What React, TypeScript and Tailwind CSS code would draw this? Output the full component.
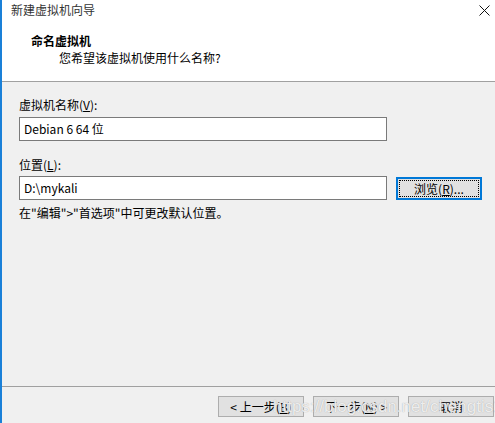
import React from "react";

const font = { fontFamily: '"Noto Sans CJK SC", "Noto Sans", sans-serif' };

function U({ children }: { children: React.ReactNode }) {
  return <span className="underline underline-offset-[1px]">{children}</span>;
}

export default function App() {
  return (
    <div
      className="relative w-[495px] h-[423px] bg-[#f0f0f0] border-l-2 border-[#1a80d8] flex flex-col text-[12px] text-black overflow-hidden"
      style={font}
    >
      <div className="h-[82px] bg-white border-b border-[#a0a0a0] flex flex-col shrink-0">
        <div className="flex items-start justify-between pt-[2px] pl-[9px] pr-[4px]">
          <span className="leading-[16px] text-[#333]">新建虚拟机向导</span>
          <svg width="11" height="11" viewBox="0 0 11 11" className="mt-[3px] mr-[1px]">
            <path d="M0.5 0.5 L10.5 10.5 M10.5 0.5 L0.5 10.5" stroke="#111" strokeWidth="1" />
          </svg>
        </div>
        <div className="mt-[15px] pl-[29px] leading-[16px] font-bold">命名虚拟机</div>
        <div className="mt-[1px] pl-[57px] leading-[16px]">您希望该虚拟机使用什么名称?</div>
      </div>

      <div className="flex-1 pt-[15px] pl-[17px] flex flex-col">
        <div className="leading-[16px]">
          虚拟机名称(<U>V</U>):
        </div>
        <div className="mt-[4px] w-[368px] h-[24px] bg-white border border-[#7a7a7a] flex items-center pl-[4px] leading-[16px]">
          Debian 6 64 位
        </div>
        <div className="mt-[16px] leading-[16px]">
          位置(<U>L</U>):
        </div>
        <div className="mt-[3px] flex items-start gap-[9px]">
          <div className="w-[368px] h-[24px] bg-white border border-[#7a7a7a] flex items-center pl-[4px] leading-[16px]">
            D:\mykali
          </div>
          <div className="mt-[1px] w-[86px] h-[23px] border-2 border-[#0078d7] bg-[#e1e1e1] p-[1px]">
            <div className="w-full h-full border border-dotted border-black flex items-center justify-center leading-[16px]">
              浏览(<U>R</U>)...
            </div>
          </div>
        </div>
        <div className="mt-[5px] leading-[16px]">在"编辑"&gt;"首选项"中可更改默认位置。</div>
      </div>

      <div className="h-[37px] shrink-0 border-t border-[#a0a0a0] pt-[9px] flex justify-end gap-[9px] pr-[1px]">
        <div className="w-[86px] h-[21px] border border-[#adadad] bg-[#e1e1e1] flex items-center justify-center leading-[16px]">
          &lt; 上一步(<U>B</U>)
        </div>
        <div className="w-[86px] h-[21px] border border-[#adadad] bg-[#e1e1e1] flex items-center justify-center leading-[16px]">
          下一步(<U>N</U>) &gt;
        </div>
        <div className="w-[86px] h-[21px] border border-[#adadad] bg-[#e1e1e1] flex items-center justify-center leading-[16px]">
          取消
        </div>
      </div>

      <div
        className="absolute left-[271px] top-[397px] text-[17px] leading-[20px] text-white/80 [text-shadow:0_0_1px_#9a9a9a] pointer-events-none whitespace-nowrap"
        style={{ fontFamily: '"Liberation Sans", Arial, sans-serif' }}
      >
        https://blog.csdn.net/chengtis1
      </div>
    </div>
  );
}
